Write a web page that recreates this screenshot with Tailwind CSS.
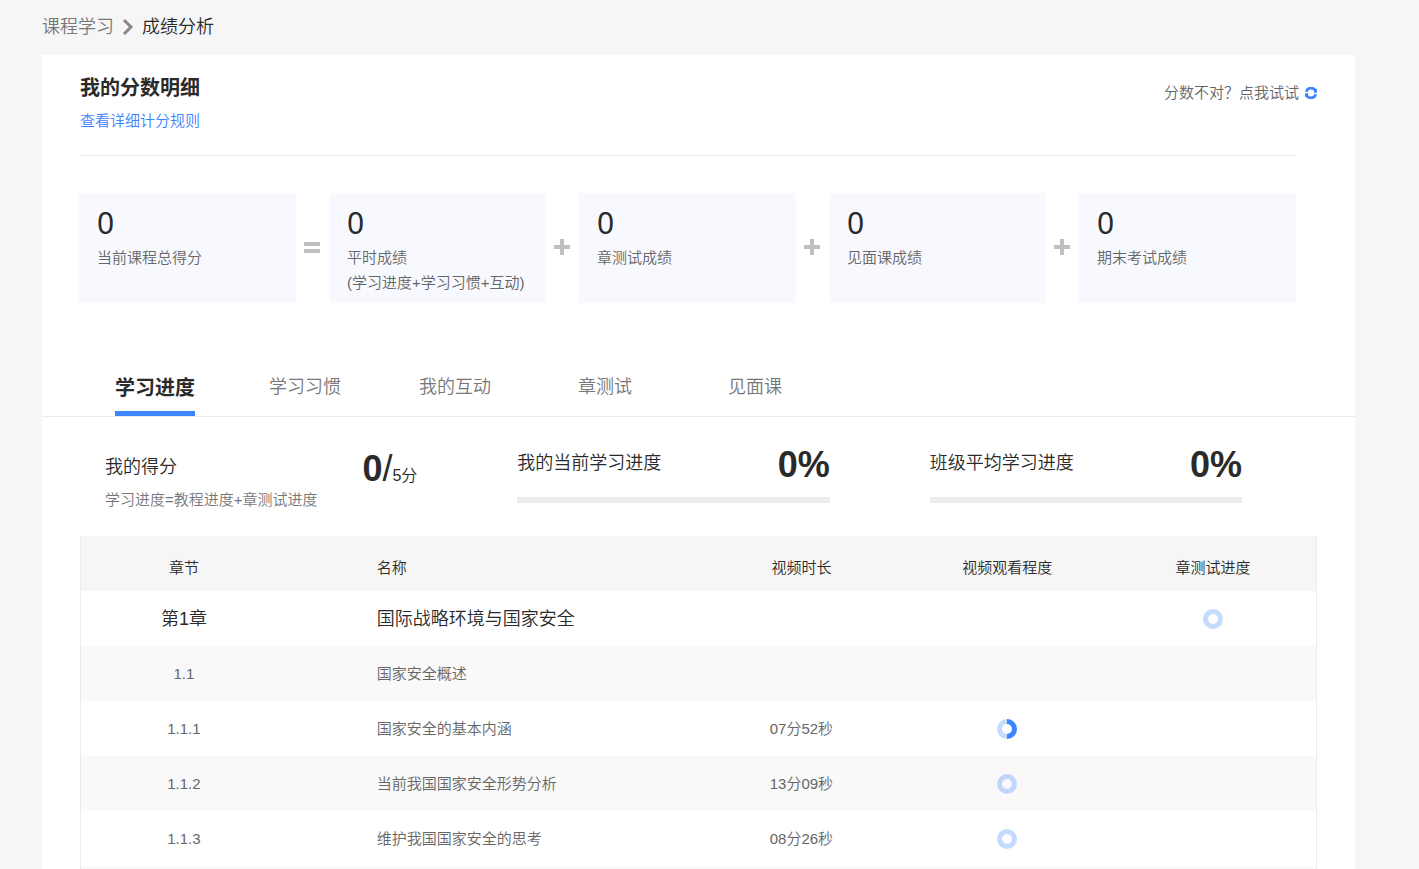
<!DOCTYPE html>
<html lang="zh-CN">
<head>
    <meta charset="UTF-8">
    <meta name="viewport" content="width=device-width, initial-scale=1.0">
    <title>成绩分析</title>
    <script src="https://cdn.jsdelivr.net/npm/@tailwindcss/browser@4"></script>
</head>
<body class="bg-[#f6f6f6] h-screen overflow-hidden flex flex-col pl-[42px] pr-16 font-['Liberation_Sans','Noto_Sans_CJK_SC',sans-serif] font-[350] text-[15px] leading-5 text-[#666]">

<!-- Breadcrumb -->
<nav class="h-[54px] mb-px shrink-0 flex items-center text-lg">
    <a href="#" class="text-[#777]">课程学习</a>
    <svg class="w-3 h-[18px] mx-2" viewBox="0 0 12 18" fill="none" stroke="#888" stroke-width="3"><path d="M2 2l7 7-7 7"/></svg>
    <span class="text-[#2a2a2a]">成绩分析</span>
</nav>

<main class="bg-white grow min-h-0 overflow-hidden">
    <!-- Header -->
    <div class="flex justify-between pl-[38px] pr-[38px]">
        <div class="pt-[21px]">
            <h1 class="text-xl leading-6 font-bold text-[#2a2a2a]">我的分数明细</h1>
            <a href="#" class="block mt-[11px] text-[#3d84ff]">查看详细计分规则</a>
        </div>
        <button class="self-start mt-7 flex items-center gap-[6px] cursor-pointer">
            分数不对？点我试试
            <svg class="w-3 h-3" viewBox="0 0 12 12" fill="none" stroke="#3d84ff" stroke-width="2.6"><path d="M1.3 4.9A4.8 4.8 0 0 1 10.7 5M10.7 7.1A4.8 4.8 0 0 1 1.3 7"/><path d="M12 1.6v4.2H8.4zM0 10.4V6.2h3.6z" fill="#3d84ff" stroke="none"/></svg>
        </button>
    </div>

    <!-- Score formula -->
    <div class="ml-[37px] mr-[59px] mt-6 pt-[37px] border-t border-[#ebebeb] flex">
        <section class="flex-1 h-[110px] bg-[#f8f9ff] pl-[18px] pt-[14px] whitespace-nowrap">
            <div class="font-['Noto_Sans',sans-serif] font-normal text-[30px] leading-8 text-[#2a2a2a]">0</div>
            <p class="mt-[6px] leading-[25px]">当前课程总得分</p>
        </section>
        <svg class="w-[33px] h-[110px]" viewBox="0 0 33 110" fill="#bfbfbf"><path d="M8 49h16v4H8zM8 56h16v4H8z"/></svg>
        <section class="flex-1 h-[110px] bg-[#f8f9ff] pl-[18px] pt-[14px] whitespace-nowrap">
            <div class="font-['Noto_Sans',sans-serif] font-normal text-[30px] leading-8 text-[#2a2a2a]">0</div>
            <p class="mt-[6px] leading-[25px]">平时成绩<br>(学习进度+学习习惯+互动)</p>
        </section>
        <svg class="w-[33px] h-[110px]" viewBox="0 0 33 110" fill="#bfbfbf"><path d="M8 52h6v-6h4v6h6v4h-6v6h-4v-6H8z"/></svg>
        <section class="flex-1 h-[110px] bg-[#f8f9ff] pl-[18px] pt-[14px] whitespace-nowrap">
            <div class="font-['Noto_Sans',sans-serif] font-normal text-[30px] leading-8 text-[#2a2a2a]">0</div>
            <p class="mt-[6px] leading-[25px]">章测试成绩</p>
        </section>
        <svg class="w-[33px] h-[110px]" viewBox="0 0 33 110" fill="#bfbfbf"><path d="M8 52h6v-6h4v6h6v4h-6v6h-4v-6H8z"/></svg>
        <section class="flex-1 h-[110px] bg-[#f8f9ff] pl-[18px] pt-[14px] whitespace-nowrap">
            <div class="font-['Noto_Sans',sans-serif] font-normal text-[30px] leading-8 text-[#2a2a2a]">0</div>
            <p class="mt-[6px] leading-[25px]">见面课成绩</p>
        </section>
        <svg class="w-[33px] h-[110px]" viewBox="0 0 33 110" fill="#bfbfbf"><path d="M8 52h6v-6h4v6h6v4h-6v6h-4v-6H8z"/></svg>
        <section class="flex-1 h-[110px] bg-[#f8f9ff] pl-[18px] pt-[14px] whitespace-nowrap">
            <div class="font-['Noto_Sans',sans-serif] font-normal text-[30px] leading-8 text-[#2a2a2a]">0</div>
            <p class="mt-[6px] leading-[25px]">期末考试成绩</p>
        </section>
    </div>

    <!-- Tabs -->
    <div class="mt-[55px] pl-[38px] h-[59px] border-b border-[#ebebeb] flex text-lg text-[#777]" role="tablist">
        <button role="tab" aria-selected="true" class="w-[150px] flex justify-center cursor-pointer">
            <span class="h-[58px] pt-4 border-b-[5px] border-[#3d84ff] text-xl font-bold text-[#2a2a2a]">学习进度</span>
        </button>
        <button role="tab" class="w-[150px] cursor-pointer">学习习惯</button>
        <button role="tab" class="w-[150px] cursor-pointer">我的互动</button>
        <button role="tab" class="w-[150px] cursor-pointer">章测试</button>
        <button role="tab" class="w-[150px] cursor-pointer">见面课</button>
    </div>

    <div class="mx-[38px]">
        <!-- Progress summary -->
        <div class="grid grid-cols-3 h-[119px] text-[#2a2a2a]">
            <div class="pl-[25px] pr-[75px] pt-[30px]">
                <div class="flex justify-between items-center h-10">
                    <h2 class="text-lg">我的得分</h2>
                    <p class="pt-1 text-base"><b class="text-4xl font-bold">0</b><span class="text-4xl">/</span>5分</p>
                </div>
                <p class="mt-[3px] text-[#777] whitespace-nowrap">学习进度=教程进度+章测试进度</p>
            </div>
            <div class="pl-[25px] pr-[75px] pt-[26px]">
                <div class="flex justify-between items-center h-10">
                    <h2 id="mine" class="text-lg">我的当前学习进度</h2>
                    <b class="pt-1 text-4xl font-bold">0%</b>
                </div>
                <div class="mt-[14px] h-[6px] bg-[#ececec]" role="progressbar" aria-labelledby="mine" aria-valuenow="0"></div>
            </div>
            <div class="pl-[25px] pr-[75px] pt-[26px]">
                <div class="flex justify-between items-center h-10">
                    <h2 id="average" class="text-lg">班级平均学习进度</h2>
                    <b class="pt-1 text-4xl font-bold">0%</b>
                </div>
                <div class="mt-[14px] h-[6px] bg-[#ececec]" role="progressbar" aria-labelledby="average" aria-valuenow="0"></div>
            </div>
        </div>

        <!-- Chapters -->
        <table class="w-full table-fixed border-x border-[#ebebeb] border-separate border-spacing-0 text-center">
            <thead>
                <tr class="h-[55px] bg-[#f6f6f6] text-[#2a2a2a]">
                    <th class="w-1/6 pt-2 font-[350]">章节</th>
                    <th class="w-1/3 pt-2 pl-[90px] font-[350] text-left">名称</th>
                    <th class="w-1/6 pt-2 font-[350]">视频时长</th>
                    <th class="w-1/6 pt-2 font-[350]">视频观看程度</th>
                    <th class="w-1/6 pt-2 font-[350]">章测试进度</th>
                </tr>
            </thead>
            <tbody>
                <tr class="h-[55px] text-lg text-[#2a2a2a]">
                    <td>第1章</td>
                    <td class="pl-[90px] text-left">国际战略环境与国家安全</td>
                    <td></td>
                    <td></td>
                    <td><svg class="size-5 mx-auto" viewBox="0 0 20 20" fill="none" stroke-width="5"><circle cx="10" cy="10" r="7.5" stroke="#c4daff"/></svg></td>
                </tr>
                <tr class="h-[55px] bg-[#f9f9f9]">
                    <td>1.1</td>
                    <td class="pl-[90px] text-left">国家安全概述</td>
                    <td></td>
                    <td></td>
                    <td></td>
                </tr>
                <tr class="h-[55px]">
                    <td>1.1.1</td>
                    <td class="pl-[90px] text-left">国家安全的基本内涵</td>
                    <td>07分52秒</td>
                    <td><svg class="size-5 mx-auto" viewBox="0 0 20 20" fill="none" stroke-width="5"><circle cx="10" cy="10" r="7.5" stroke="#c4daff"/><path d="M10 2.5a7.5 7.5 0 0 1 0 15" stroke="#3d84ff"/></svg></td>
                    <td></td>
                </tr>
                <tr class="h-[55px] bg-[#f9f9f9]">
                    <td>1.1.2</td>
                    <td class="pl-[90px] text-left">当前我国国家安全形势分析</td>
                    <td>13分09秒</td>
                    <td><svg class="size-5 mx-auto" viewBox="0 0 20 20" fill="none" stroke-width="5"><circle cx="10" cy="10" r="7.5" stroke="#c0d6fb"/></svg></td>
                    <td></td>
                </tr>
                <tr class="h-[55px]">
                    <td>1.1.3</td>
                    <td class="pl-[90px] text-left">维护我国国家安全的思考</td>
                    <td>08分26秒</td>
                    <td><svg class="size-5 mx-auto" viewBox="0 0 20 20" fill="none" stroke-width="5"><circle cx="10" cy="10" r="7.5" stroke="#c4daff"/></svg></td>
                    <td></td>
                </tr>
                <tr class="h-[55px] bg-[#f9f9f9]">
                    <td colspan="5"></td>
                </tr>
            </tbody>
        </table>
    </div>
</main>

</body>
</html>
